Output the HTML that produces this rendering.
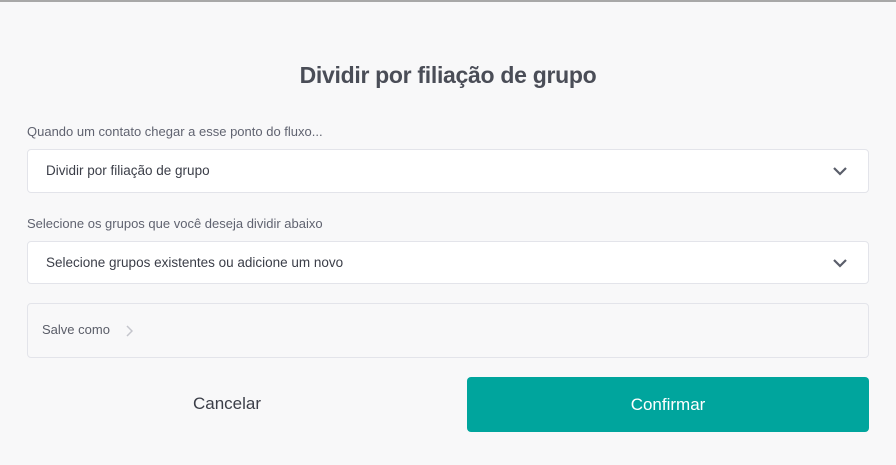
<!DOCTYPE html>
<html><head><style>
body{margin:0;width:896px;height:465px;background:#f8f8f9;font-family:"Liberation Sans",sans-serif;position:relative;overflow:hidden}
.bar{position:absolute;left:0;top:0;width:896px;height:2px;background:#a8a8a8}
.t{position:absolute;left:0;width:896px;text-align:center;top:62px;font-size:23px;font-weight:bold;color:#4a4d57;letter-spacing:-0.3px}
.l{position:absolute;left:27px;font-size:13px;color:#606370}
.s{position:absolute;left:27px;width:842px;background:#fff;border:1px solid #e3e4ea;border-radius:4px;box-sizing:border-box}
.s span{position:absolute;left:18px;font-size:13.5px;color:#3b3e48}
.s svg{position:absolute;right:20px}
</style></head><body>
<div class="bar"></div>
<div class="t">Dividir por filiação de grupo</div>
<div class="l" style="top:124px">Quando um contato chegar a esse ponto do fluxo...</div>
<div class="s" style="top:149px;height:44px"><span style="top:13px">Dividir por filiação de grupo</span><svg style="top:16px" width="16" height="10" viewBox="0 0 16 10"><path d="M2 2l6 6 6-6" fill="none" stroke="#5a5e6a" stroke-width="2.2"/></svg></div>
<div class="l" style="top:216px">Selecione os grupos que você deseja dividir abaixo</div>
<div class="s" style="top:241px;height:43px"><span style="top:13px">Selecione grupos existentes ou adicione um novo</span><svg style="top:16px" width="16" height="10" viewBox="0 0 16 10"><path d="M2 2l6 6 6-6" fill="none" stroke="#5a5e6a" stroke-width="2.2"/></svg></div>
<div class="s" style="top:303px;height:55px;background:#f8f8f9"><span style="left:14px;top:18px;font-size:13px;color:#5a5d68">Salve como</span><svg style="left:97px;top:21px" width="8" height="12" viewBox="0 0 8 12"><path d="M2 1l5 5-5 5" fill="none" stroke="#c4c5cc" stroke-width="1.5"/></svg></div>
<div style="position:absolute;left:27px;width:400px;top:394px;text-align:center;font-size:17px;color:#3b3e48">Cancelar</div>
<div style="position:absolute;left:467px;top:377px;width:402px;height:55px;background:#00a59d;border-radius:4px;color:#fff;font-size:17px;text-align:center;line-height:55px">Confirmar</div>
</body></html>
